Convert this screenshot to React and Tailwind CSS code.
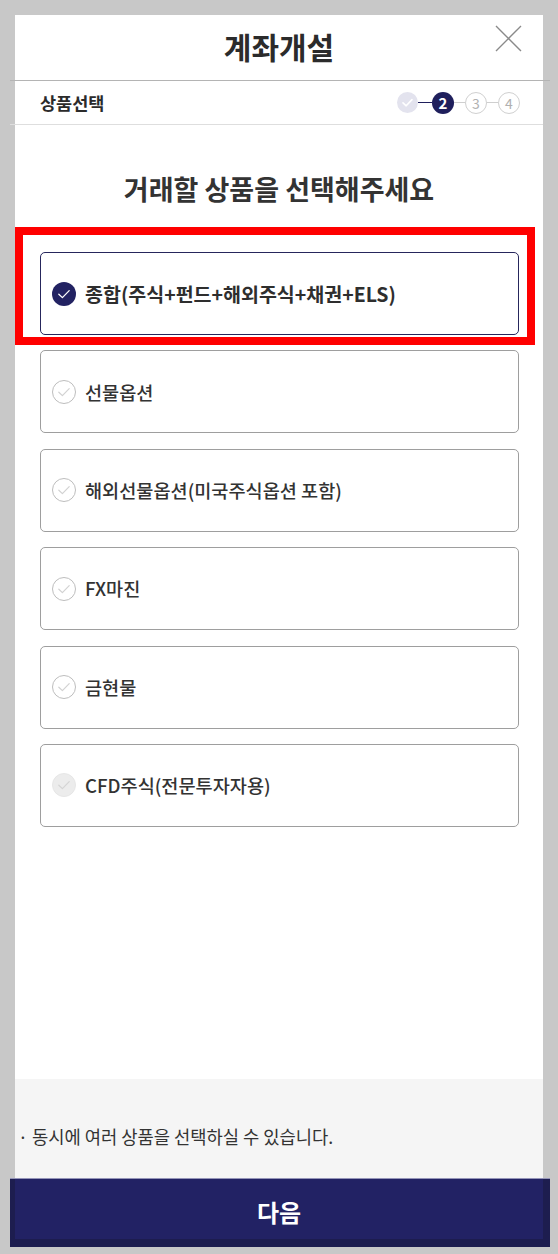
import React from "react";

const FONT = { fontFamily: '"Noto Sans CJK KR", "Noto Sans", sans-serif' };

function CheckIcon({ state }) {
  if (state === "on") {
    return (
      <svg width="24" height="24" viewBox="0 0 24 24" className="shrink-0">
        <circle cx="12" cy="12" r="12" fill="#222262" />
        <path d="M6.8 12.2 L10.4 15.6 L17.2 8.6" fill="none" stroke="#ffffff" strokeWidth="1.3" strokeLinecap="round" strokeLinejoin="round" />
      </svg>
    );
  }
  if (state === "disabled") {
    return (
      <svg width="24" height="24" viewBox="0 0 24 24" className="shrink-0">
        <circle cx="12" cy="12" r="11.5" fill="#ececec" stroke="#e6e6e6" strokeWidth="1" />
        <path d="M6.8 12.2 L10.4 15.6 L17.2 8.6" fill="none" stroke="#d4d4d4" strokeWidth="1.2" strokeLinecap="round" strokeLinejoin="round" />
      </svg>
    );
  }
  return (
    <svg width="24" height="24" viewBox="0 0 24 24" className="shrink-0">
      <circle cx="12" cy="12" r="11.5" fill="#ffffff" stroke="#bdbdbd" strokeWidth="1" />
      <path d="M6.8 12.2 L10.4 15.6 L17.2 8.6" fill="none" stroke="#d2d2d2" strokeWidth="1.2" strokeLinecap="round" strokeLinejoin="round" />
    </svg>
  );
}

function Card({ label, state }) {
  const selected = state === "on";
  return (
    <div
      className={
        selected
          ? "h-[83px] rounded-[5px] border border-[#26265c] bg-white flex items-center pl-[11px] gap-[9px]"
          : "h-[83px] rounded-[5px] border border-[#9e9e9e] bg-white flex items-center pl-[11px] gap-[9px]"
      }
    >
      <CheckIcon state={state} />
      <span
        className={
          selected
            ? "text-[19.5px] font-bold text-[#2e2e2e] leading-none"
            : "text-[18.6px] font-medium text-[#333333] leading-none"
        }
      >
        {label}
      </span>
    </div>
  );
}

function Steps() {
  return (
    <div className="flex items-center">
      <div className="w-[21px] h-[21px] rounded-full bg-[#e3e3ee] flex items-center justify-center">
        <svg width="13" height="13" viewBox="0 0 13 13">
          <path d="M2 6.8 L5.2 9.8 L11 3.6" fill="none" stroke="#ffffff" strokeWidth="1.6" strokeLinecap="round" strokeLinejoin="round" />
        </svg>
      </div>
      <div className="w-[14px] h-[1.5px] bg-[#1f1f5c]" />
      <div className="w-[22px] h-[22px] rounded-full bg-[#1f1f5c] flex items-center justify-center text-white text-[15px] font-bold leading-none">
        2
      </div>
      <div className="w-[11px] h-px bg-[#cfcfcf]" />
      <div className="w-[22px] h-[22px] rounded-full border border-[#d0d0d0] flex items-center justify-center text-[#b0b0b0] text-[14px] leading-none">
        3
      </div>
      <div className="w-[11px] h-px bg-[#cfcfcf]" />
      <div className="w-[22px] h-[22px] rounded-full border border-[#d0d0d0] flex items-center justify-center text-[#b0b0b0] text-[14px] leading-none">
        4
      </div>
    </div>
  );
}

export default function App() {
  const items = [
    { label: "종합(주식+펀드+해외주식+채권+ELS)", state: "on" },
    { label: "선물옵션", state: "off" },
    { label: "해외선물옵션(미국주식옵션 포함)", state: "off" },
    { label: "FX마진", state: "off" },
    { label: "금현물", state: "off" },
    { label: "CFD주식(전문투자자용)", state: "disabled" },
  ];

  return (
    <div style={FONT} className="relative w-[558px] h-[1254px] bg-[#c8c8c8] pt-[15px] flex flex-col overflow-hidden">
      <div className="mx-[15px] flex-1 bg-white flex flex-col">
        <div className="relative h-[65px] flex items-center justify-center">
          <h1 className="text-[30px] font-bold text-[#2b2b2b] leading-none -mt-[4px]">계좌개설</h1>
          <svg className="absolute right-[21px] top-[10px]" width="27" height="27" viewBox="0 0 27 27">
            <path d="M1 1 L26 26 M26 1 L1 26" stroke="#8a8a8a" strokeWidth="1.4" />
          </svg>
        </div>
        <div className="h-px bg-[#b4b4b4] ml-[-5px] mr-[-7px]" />
        <div className="h-[43px] flex items-center justify-between pl-[25px] pr-[23px]">
          <span className="text-[17.5px] font-bold text-[#2b2b2b] leading-none">상품선택</span>
          <Steps />
        </div>
        <div className="h-px bg-[#dedede] ml-[-5px]" />

        <h2 className="mt-[46px] text-center text-[27px] font-bold text-[#333333] leading-[36px]">
          거래할 상품을 선택해주세요
        </h2>

        <div className="mt-[45px] ml-[25px] mr-[24px] flex flex-col gap-[15.4px]">
          {items.map((it) => (
            <Card key={it.label} label={it.label} state={it.state} />
          ))}
        </div>

        <div className="flex-1" />

        <div className="h-[99px] bg-[#f5f5f5] flex items-center pl-[3px] pt-[17px]">
          <span className="text-[17.7px] text-[#333333] leading-none">· 동시에 여러 상품을 선택하실 수 있습니다.</span>
        </div>
      </div>

      <div className="ml-[10px] mr-[8px] flex flex-col">
        <div className="h-px bg-[#9494b8]" />
        <button className="h-[68px] bg-[#222264] border-l-[5px] border-r-[7px] border-b-[8px] border-t-0 border-[#1d1d4f] flex items-center justify-center pt-[6px]">
          <span className="text-[24px] font-bold text-white leading-none">다음</span>
        </button>
      </div>
      <div className="h-[7px]" />

      <div className="absolute left-[15px] top-[227px] w-[520px] h-[118px] border-[8px] border-[#ff0000] pointer-events-none" />
    </div>
  );
}
